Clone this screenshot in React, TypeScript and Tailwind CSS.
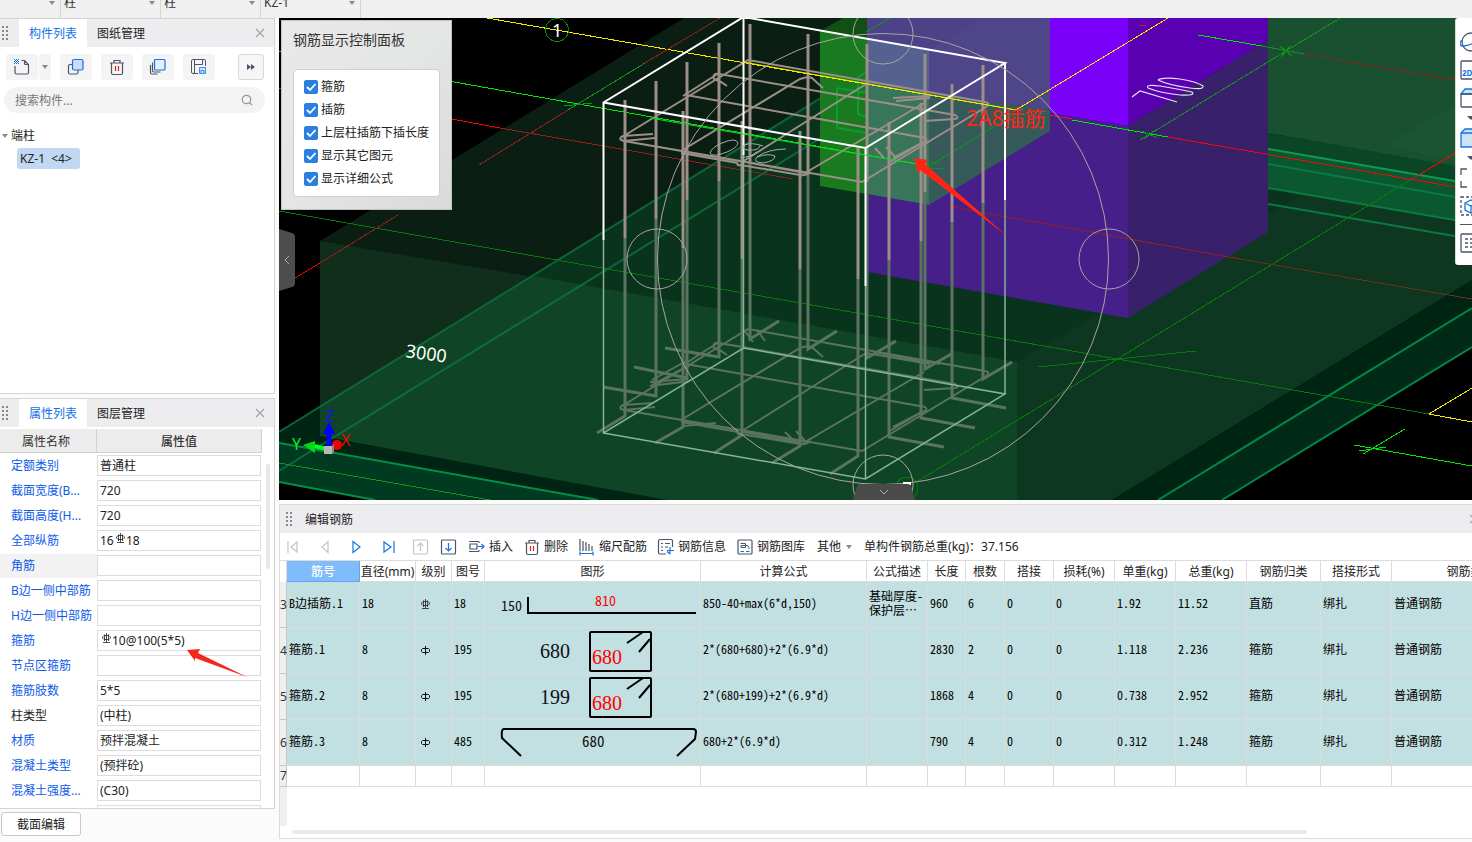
import React from "react";

const UI = "font-['Noto_Sans','Noto_Sans_CJK_SC',sans-serif]";
const CELL = "font-['Noto_Sans_CJK_SC',sans-serif] [font-feature-settings:'hwid']";

type IconProps = { children: React.ReactNode; label?: string; className?: string };

function Icon({ children, className = "h-[18px] w-[18px]" }: IconProps) {
  return (
    <svg viewBox="0 0 18 18" fill="none" stroke="#4b5568" strokeWidth="1.2" aria-hidden="true" className={className}>
      {children}
    </svg>
  );
}

function Caret() {
  return (
    <svg viewBox="0 0 6 4" aria-hidden="true" className="h-1 w-1.5 shrink-0">
      <path d="M0 0H6L3 4Z" fill="#8a8a8a" />
    </svg>
  );
}

function Grip() {
  return (
    <svg viewBox="0 0 8 16" aria-hidden="true" className="h-4 w-2 shrink-0">
      <g fill="#888">
        {[1, 5, 9, 13].map((y) => (
          <React.Fragment key={y}>
            <rect x="1" y={y} width="2" height="2" />
            <rect x="5" y={y} width="2" height="2" />
          </React.Fragment>
        ))}
      </g>
    </svg>
  );
}

function Close() {
  return (
    <svg viewBox="0 0 10 10" aria-hidden="true" className="h-2.5 w-2.5">
      <path d="M1 1L9 9M9 1L1 9" stroke="#a3a3a3" strokeWidth="1.2" />
    </svg>
  );
}

function Trash() {
  return (
    <Icon>
      <path d="M2 5H16M6 5V2.500H12V5M3.500 5V15Q3.500 16.500 5 16.500H13Q14.500 16.500 14.500 15V5" />
      <path d="M7.500 8V13M10.500 8V13" stroke="#e02020" />
    </Icon>
  );
}

function Rebar({ level }: { level: 1 | 3 }) {
  return (
    <svg viewBox="0 0 11 11" role="img" aria-label={level === 3 ? "HRB400" : "HPB300"} className="h-[11px] w-[11px] shrink-0">
      {level === 3 ? (
        <path d="M3 2.500H8L9.500 4V5L8 6.500H3L1.500 5V4ZM5.500 0V10M3.500 1.500V8M7.500 1.500V8M2 9.500H9" fill="none" stroke="#222" strokeWidth=".8" />
      ) : (
        <path d="M2.500 3.500H8.500L9.500 4.500V6.500L8.500 7.500H2.500L1.500 6.500V4.500ZM5.500 1V10" fill="none" stroke="#111" />
      )}
    </svg>
  );
}

function TopBar() {
  const items = ["", "柱", "柱", "KZ-1"];
  return (
    <div className="flex h-[18px] shrink-0 items-end overflow-hidden bg-[#f0f0f0]">
      {items.map((v, i) => (
        <div key={i} className="relative flex h-[30px] w-[100px] shrink-0 items-center border-r border-[#d6d6d6] first:w-[61px]">
          <select
            aria-label={`构件选择 ${i + 1}`}
            defaultValue={v}
            className="h-full w-full appearance-none bg-transparent pl-[3px] text-xs text-[#333] outline-none"
          >
            <option>{v}</option>
          </select>
          <span className="pointer-events-none absolute right-[5px] flex">
            <Caret />
          </span>
        </div>
      ))}
    </div>
  );
}

function PanelTabs({ active, other }: { active: string; other: string }) {
  return (
    <div className="flex h-7 shrink-0 items-stretch bg-[#ededf0]">
      <div className="flex w-[19px] items-center pl-px">
        <Grip />
      </div>
      <button className="bg-white px-2.5 pt-0.5 text-xs text-[#1272e6]">{active}</button>
      <button className="px-2.5 pt-0.5 text-xs text-[#222]">{other}</button>
      <button aria-label="关闭" className="ml-auto flex items-center px-[9px]">
        <Close />
      </button>
    </div>
  );
}

const toolBtn = "flex h-[26px] w-8 items-center justify-center rounded-[3px] bg-[#f4f4f5]";

function ComponentPanel() {
  return (
    <section className="flex h-[376px] shrink-0 flex-col border-y border-r border-[#d4d4d4] bg-white">
      <PanelTabs active="构件列表" other="图纸管理" />
      <div className="flex items-center gap-[9px] pl-1.5 pr-2.5 pt-[7px]">
        <div className="flex gap-px">
          <button aria-label="新建" className={toolBtn}>
            <Icon>
              <path d="M8.500 2.500H11.500L15.500 6.500V14.500Q15.500 16 14 16H3.500Q2 16 2 14.500V8M11.500 2.500V5.500Q11.500 6.500 12.500 6.500H15.500" />
              <path d="M1 1.500H6M2 2.500H6M1 3.500H6M2 4.500H6M1 5.500H6" stroke="#1677e8" strokeDasharray="1 1" strokeWidth="1" />
            </Icon>
          </button>
          <button aria-label="新建选项" className="flex h-[26px] w-3 items-center justify-center rounded-[3px] bg-[#f4f4f5]">
            <Caret />
          </button>
        </div>
        <button aria-label="复制" className={toolBtn}>
          <Icon>
            <rect x="1.500" y="6.500" width="9.500" height="9.500" rx="1.500" />
            <rect x="5.500" y="1.500" width="10.500" height="10.500" rx="1.500" stroke="#1272e6" fill="#cbdcf5" />
          </Icon>
        </button>
        <button aria-label="删除" className={toolBtn}>
          <Trash />
        </button>
        <button aria-label="层间复制" className={toolBtn}>
          <Icon>
            <path d="M1.500 7V14.500Q1.500 16 3 16H8.500M3.500 4.500V12.500Q3.500 14 5 14H11.500" />
            <rect x="5.500" y="1.500" width="10.500" height="10.500" rx="1" stroke="#1272e6" fill="#e6f0fd" />
          </Icon>
        </button>
        <button aria-label="存档" className={toolBtn}>
          <Icon>
            <path d="M8 15.500H3Q1.500 15.500 1.500 14V3Q1.500 1.500 3 1.500H14Q15.500 1.500 15.500 3V8M4.500 1.500V15M4.500 6.500H12.500V1.500" strokeWidth="1" />
            <path d="M9.500 9.500H15.500V15.500H9.500ZM11 15V12.500H14V15" stroke="#3f8cea" strokeWidth="1" fill="#cfe2fb" />
          </Icon>
        </button>
        <button aria-label="更多" className="ml-auto flex h-[26px] w-[26px] items-center justify-center rounded-[3px] border border-[#d9d9d9] bg-[#f6f6f6]">
          <svg viewBox="0 0 8 6" aria-hidden="true" className="h-1.5 w-2">
            <path d="M0 0L4 3L0 6ZM4 0L8 3L4 6Z" fill="#4b5568" />
          </svg>
        </button>
      </div>
      <div className="ml-1 mr-[9px] mt-[7px] flex h-[26px] items-center rounded-full bg-[#f3f3f4] pl-[11px] pr-3">
        <input aria-label="搜索构件" placeholder="搜索构件..." className="min-w-0 flex-1 bg-transparent pt-px text-xs outline-none placeholder:text-[#777]" />
        <svg viewBox="0 0 12 12" fill="none" stroke="#999" strokeWidth="1.300" aria-hidden="true" className="h-3 w-3">
          <circle cx="5.500" cy="5.500" r="4.200" />
          <path d="M8.500 8.500L11 11" />
        </svg>
      </div>
      <ul className="mt-2.5 text-xs text-[#222]">
        <li>
          <div className="flex h-6 items-center gap-[3px] pl-0.5 pt-0.5">
            <Caret />
            端柱
          </div>
          <ul className="pl-[17px]">
            <li className="mt-px flex h-[21px] w-[63px] items-center whitespace-pre rounded-[3px] bg-[#c0d8f2] pl-[3px]">{"KZ-1  <4>"}</li>
          </ul>
        </li>
      </ul>
    </section>
  );
}

type Prop = { name: string; value?: string; plain?: boolean; marked?: boolean; parts?: [string, string] };

const props: Prop[] = [
  { name: "定额类别", value: "普通柱" },
  { name: "截面宽度(B...", value: "720" },
  { name: "截面高度(H...", value: "720" },
  { name: "全部纵筋", parts: ["16", "18"] },
  { name: "角筋", marked: true },
  { name: "B边一侧中部筋" },
  { name: "H边一侧中部筋" },
  { name: "箍筋", parts: ["", "10@100(5*5)"] },
  { name: "节点区箍筋" },
  { name: "箍筋肢数", value: "5*5" },
  { name: "柱类型", value: "(中柱)", plain: true },
  { name: "材质", value: "预拌混凝土" },
  { name: "混凝土类型", value: "(预拌砼)" },
  { name: "混凝土强度...", value: "(C30)" },
  { name: "" },
];

function PropertyPanel() {
  return (
    <section className="relative mt-1 flex min-h-0 flex-1 flex-col border-y border-r border-[#d4d4d4] bg-white">
      <PanelTabs active="属性列表" other="图层管理" />
      <div className="mr-3 mt-0.5 flex h-6 shrink-0 border-b border-[#d0d0d0] bg-[#ececed] text-xs text-[#333]">
        <div className="flex w-[97px] items-center justify-center border-r border-[#d0d0d0] pr-1 pt-0.5">属性名称</div>
        <div className="flex flex-1 items-center justify-center border-r border-[#d0d0d0] pt-0.5 font-medium">属性值</div>
      </div>
      <div className="min-h-0 flex-1 overflow-hidden">
        {props.map((p, i) => (
          <div key={i} className="flex h-[25px] items-center">
            <label
              htmlFor={`prop-${i}`}
              className={`flex h-6 w-[97px] shrink-0 items-center overflow-hidden whitespace-nowrap pl-[11px] text-xs ${p.plain ? "text-[#222]" : "text-[#0d5be8]"} ${p.marked ? "bg-[#f2f2f2]" : ""}`}
            >
              {p.name}
            </label>
            <div className="mr-[13px] flex h-[21px] min-w-0 flex-1 items-center border border-[#dcdcdc] bg-white px-0.5 text-xs text-[#222]">
              {p.parts ? (
                <>
                  {p.parts[0] ? <input aria-label={`${p.name}根数`} defaultValue={p.parts[0]} className="w-[15px] bg-transparent outline-none" /> : <span className="w-px" />}
                  <span className="pb-1">
                    <Rebar level={3} />
                  </span>
                  <input id={`prop-${i}`} defaultValue={p.parts[1]} className="min-w-0 flex-1 bg-transparent outline-none" />
                </>
              ) : (
                <input id={`prop-${i}`} aria-label={p.name || "其它属性"} defaultValue={p.value ?? ""} className="min-w-0 flex-1 bg-transparent outline-none" />
              )}
            </div>
          </div>
        ))}
      </div>
      <div className="absolute right-1 top-[65px] h-[105px] w-1 rounded-full bg-[#e8e8e8]" />
      <svg viewBox="0 0 60 30" aria-hidden="true" className="pointer-events-none absolute left-[187px] top-[250px] h-[30px] w-[60px]">
        <path d="M0 1L13 0L11 4L60 28L8 9L8 12Z" fill="#f5261a" />
      </svg>
    </section>
  );
}

const bars: number[][] = [
  [625, 100, 238, 416, 597, 433],
  [656, 81, 219, 396, 603, 387],
  [687, 62, 200, 378, 634, 367],
  [719, 43, 181, 357, 665, 348],
  [683, 111, 248, 427, 655, 443],
  [742, 121, 259, 435, 714, 453],
  [750, 24, 162, 339, 779, 321],
  [800, 131, 269, 446, 772, 463],
  [808, 34, 172, 349, 837, 331],
  [858, 148, 279, 456, 830, 474],
  [867, 44, 182, 358, 896, 341],
  [925, 54, 192, 369, 953, 353],
  [921, 103, 241, 418, 975, 428],
  [889, 122, 260, 437, 944, 447],
  [952, 84, 222, 398, 1006, 408],
  [983, 65, 203, 379, 1012, 362],
];

const stirrups =
  "M653 134L623 136Q617 139 624 141L862 182L986 107Q991 103 985 102L748 60L622 137M655 138L624 141" +
  "M727 86L721 82L714 79Q712 73 719 74L955 115Q960 118 955 119L924 121" +
  "M686 95L925 138Q929 141 922 143L888 163M924 142L893 158" +
  "M681 151L800 79Q808 76 812 78L823 88M681 153L738 163" +
  "M742 162L866 84M740 161L805 173L924 103M738 163Q736 166 741 165L800 175Q806 176 811 172" +
  "M719 73L683 96";

const topHooks = "M893 98L930 96M896 101L930 98M875 148L884 158M886 147L896 158";

const bottomHooks =
  "M785 432L796 443M796 431L806 442M757 330L765 341M745 331L753 342M650 386L690 381M650 382L688 379M652 385L690 365M652 380L688 360M683 426L716 423M743 432L800 443M866 353L930 364M874 352L940 364";

function Scene() {
  return (
    <svg viewBox="279 18 1193 482" preserveAspectRatio="xMinYMin slice" role="img" aria-label="三维视图" className="block h-full w-full">
      <rect x="279" y="18" width="1400" height="700" fill="#000" />
      <path d="M320 241L684 18H1472V280L1112 500H656L320 436Z" fill="#0b1e13" />
      <path d="M279 432L320 407V436L656 500H598L279 443Z" fill="#002414" />
      <path d="M279 443L598 500H375L279 482Z" fill="#003a20" />
      <path d="M320 407L838 88L1268 150L1472 184V280L1112 500H656L320 436Z" fill="#0a331d" />
      <path d="M320 407L533 276L1017 362V500H656L320 436Z" fill="#0f4526" />
      <path d="M320 241L533 277L511 290L320 407Z" fill="#112e1c" />
      <path d="M1017 362L1472 95V280L1112 500H1017Z" fill="#0d3720" />
      <path d="M1112 500L1472 280V308L1158 500Z" fill="#002414" />
      <path d="M1158 500L1472 308V347L1222 500Z" fill="#002a17" />
      <path d="M656 498L668 500H598L320 450V436Z" fill="#002414" />
      <path d="M1268 18H1472V170L1268 133Z" fill="#195030" />
      <path d="M1472 95L1385 145L1472 165Z" fill="#1b5431" />
      <path d="M1268 133L1472 169V185L1268 149Z" fill="#0a4526" />
      <path d="M1268 149L1472 184V223L1268 188Z" fill="#0b5830" />
      <g strokeWidth="2" fill="none">
        <path d="M279 432L837 88M279 471L837 128M837 88V128M837 88L866 93M837 128L866 133" stroke="#0c7540" strokeOpacity=".8" />
        <path d="M279 443L598 500M279 482L375 500" stroke="#009048" />
        <path d="M1158 500L1472 308M1222 500L1472 347" stroke="#008745" />
        <path d="M1268 149L1472 184" stroke="#0f9a54" />
        <path d="M1268 164L1472 200M1268 188L1472 223M1268 204L1472 239" stroke="#0a7a42" />
      </g>

      <path d="M820 31L843 18H867V38Z" fill="#115014" />
      <path d="M820 31L867 38V194L820 186Z" fill="#1a7a1f" />
      <path d="M867 18H1050V113L929 93L867 83Z" fill="#4c4288" />
      <path d="M929 50L982 18H1050V113L929 93Z" fill="#4f4589" />
      <path d="M867 38L929 50V93L867 83Z" fill="#55628f" />
      <path d="M867 194L929 205L1050 113L1128 126V318L867 272Z" fill="#461f8b" />
      <path d="M867 83L929 93V205L867 194Z" fill="#38755b" />
      <path d="M929 93L1050 110V131L929 205Z" fill="#355a59" />
      <path d="M1050 18H1128V126L1050 113Z" fill="#7a00fa" />
      <path d="M1128 18H1268V40L1128 126Z" fill="#5900b2" />
      <path d="M1128 126L1268 40V232L1128 318Z" fill="#38206b" />
      <path d="M867 72L858 77V114L867 117M837 88L867 93M837 88V128L867 133" stroke="#0f9a34" strokeWidth="2" fill="none" />

      <g fill="none" strokeWidth="1" shapeRendering="crispEdges">
        <path d="M487 18L1016 110L1168 18M1472 388L1429 414L1472 422" stroke="#f2e800" />
        <path d="M279 51L923 165M1354 445L1472 466M1363 454L1405 429M1359 451L1386 447M1072 120L1168 137M1198 35L1262 46" stroke="#00e800" />
        <path d="M279 211L1429 414M918 481L1410 180M1038 367L1196 351" stroke="#087808" />
        <path d="M568 110L645 63M564 106L592 103M923 170L1016 113M914 167L945 169M918 161L940 164M1140 140L1340 18M1142 131L1157 138M1144 139L1155 130M1262 46L1304 54M1280 46L1292 56M1291 45L1281 57M279 463L490 500M866 32L890 18" stroke="#12921c" />
        <path d="M279 88L452 119L500 128M1168 137L1472 190M1410 180L1472 143M295 278L320 263" stroke="#f00808" />
        <path d="M500 128L793 179M479 165L568 110M645 63L720 18M320 263L398 215M947 206L1240 259M1304 54L1472 83" stroke="#92201a" />
        <path d="M1240 259L1472 299" stroke="#6b301c" />
        <path d="M1139 25L1146 26M1050 115L1072 119" stroke="#e01040" />
        <circle cx="557" cy="30" r="11.500" stroke="#08850c" />
        <circle cx="907" cy="488" r="11" stroke="#08750c" />
      </g>
      <text x="552" y="37" fontSize="18" fill="#fff" fontFamily="Noto Sans">1</text>

      <g fill="none" stroke="#5b745f">
        <path d={stirrups} transform="translate(0 269)" strokeWidth="2" />
        <path d={bottomHooks} strokeWidth="2" />
        {bars.map(([x, , m, b, fx, fy], i) => (
          <path key={i} d={`M${x} ${m}V${b}L${fx} ${fy}`} strokeWidth="3" />
        ))}
      </g>
      <g fill="none" stroke="#9b8f88">
        <path d={stirrups + topHooks} strokeWidth="2" />
        {bars.map(([x, t, m], i) => (
          <path key={i} d={`M${x} ${t}V${m}`} strokeWidth="3" />
        ))}
      </g>
      <path d="M603.500 240V433L743.500 348L1005 394L865.500 479L603.500 433M743.500 155V348M865.500 286V479M1005 200V394" fill="none" stroke="#86b497" strokeWidth="1.500" />
      <path d="M603.500 240V102.500L743.500 17L1005 63L865.500 148L603.500 102.500M743.500 17V155M865.500 148V286M1005 63V200" fill="none" stroke="#fff" strokeWidth="2" />
      <path d="M650 118L923 165" stroke="#10d820" />
      <path d="M743 62L1016 110" stroke="#f2e800" />
      <g fill="none" stroke="#a8a3a3">
        <circle cx="883" cy="259" r="225.500" />
        <circle cx="657" cy="259" r="30" />
        <circle cx="1109" cy="259" r="30" />
        <circle cx="883" cy="34" r="30" />
        <circle cx="883" cy="485" r="30" />
      </g>
      <path d="M710 153Q712 147 722 143Q736 137 738 143Q737 148 727 152Q712 158 710 153M763 146Q752 142 744 145Q740 149 748 150Q758 151 760 146M741 157Q750 158 757 152M786 149Q768 149 757 157Q752 162 763 163Q775 161 775 156Q768 153 757 157" fill="none" stroke="#9fb0a5" />
      <path d="M1132 97L1140 91L1177 102M1148 88Q1145 84 1160 86Q1178 89 1192 92Q1196 96 1180 95Q1160 93 1148 88M1158 80Q1162 77 1180 79Q1198 82 1203 86Q1204 90 1190 88Q1168 85 1158 80" fill="none" stroke="#e8def5" strokeWidth="1.200" />

      <text x="405" y="357" fontSize="18" fill="#fff" fontFamily="Noto Sans" transform="rotate(8 405 357)">3000</text>
      <text x="966" y="126" fontSize="21" fill="#ff2616" fontFamily="Noto Sans, Noto Sans CJK SC">2A8插筋</text>
      <path d="M914 158L928 160L925 164L1007 236L920 170L918 174Z" fill="#ff2416" />

      <path d="M329 448V434" stroke="#0000ff" strokeWidth="5" />
      <path d="M329 422L335 434H323Z" fill="#0000ff" />
      <path d="M327 449L314 446" stroke="#00ff20" strokeWidth="4" />
      <path d="M303 445L315 441V453Z" fill="#00d818" />
      <circle cx="337" cy="445" r="5" fill="#f00000" />
      <path d="M331 449L341 443" stroke="#f00000" strokeWidth="4" />
      <rect x="324" y="446" width="8" height="8" fill="#b8b8b8" />
      <path d="M332 446L334 444V452L332 454Z" fill="#888" />
      <g fontSize="16" fontFamily="Noto Sans">
        <text x="325" y="422" fill="#1010ff">Z</text>
        <text x="292" y="450" fill="#00f020">Y</text>
        <text x="341" y="446" fill="#f00000">X</text>
      </g>
      <path d="M903 482H911V485H903Z" fill="#fff" />
    </svg>
  );
}

function DisplayPanel() {
  const options = ["箍筋", "插筋", "上层柱插筋下插长度", "显示其它图元", "显示详细公式"];
  return (
    <div className="absolute left-0.5 top-0.5 border border-[#c2c4c3] bg-gradient-to-br from-[#e9e9e9] via-[#e4e5e5] to-[#d8dbda] px-[11px] pb-3 pt-[9px]">
      <h2 className="text-sm leading-5 text-[#333]">钢筋显示控制面板</h2>
      <div className="mt-[19px] flex w-[147px] flex-col rounded border border-[#cfcfcf] bg-white pb-1.5 pl-2.5 pt-[5px]">
        {options.map((o) => (
          <label key={o} className="flex h-[23px] items-center gap-[3px] whitespace-nowrap text-xs text-[#222]">
            <span className="relative flex">
              <input type="checkbox" defaultChecked className="peer h-3.5 w-3.5 appearance-none rounded-[2px] border border-[#2a7fe0] checked:bg-[#2a7fe0]" />
              <svg viewBox="0 0 14 14" fill="none" stroke="#fff" strokeWidth="1.800" aria-hidden="true" className="pointer-events-none absolute left-0 top-0 h-3.5 w-3.5">
                <path d="M3 7L6 10L11.500 4" />
              </svg>
            </span>
            {o}
          </label>
        ))}
      </div>
    </div>
  );
}

const viewBtn = "flex h-5 w-[22px] shrink-0";

function ViewIcon({ children }: { children: React.ReactNode }) {
  return (
    <svg viewBox="0 0 22 20" fill="none" stroke="#4b5568" strokeWidth="1.300" aria-hidden="true" className="h-5 w-[22px]">
      {children}
    </svg>
  );
}

function DownMark() {
  return (
    <svg viewBox="0 0 22 4" aria-hidden="true" className="h-1 w-[22px] shrink-0">
      <path d="M7 0H15L11 4Z" fill="#4b5568" />
    </svg>
  );
}

function ViewBar() {
  return (
    <div className="absolute right-0 top-0 flex w-[17px] flex-col gap-2 overflow-hidden rounded-l-[3px] border-l border-[#d8d8d8] bg-white pb-3 pl-1 pt-3.5">
      <button aria-label="动态观察" className={viewBtn}>
        <ViewIcon>
          <circle cx="11" cy="10" r="9" />
          <path d="M2 8Q-3 14 4 14Q12 13 19 8" stroke="#1272e6" />
        </ViewIcon>
      </button>
      <button aria-label="二维" className={viewBtn}>
        <ViewIcon>
          <rect x="1" y="1" width="19" height="18" rx="1" />
          <text x="2" y="16" fontSize="8" fontWeight="700" fill="#1272e6" stroke="none">2D</text>
        </ViewIcon>
      </button>
      <button aria-label="三维" className={viewBtn}>
        <ViewIcon>
          <path d="M1 6L5 1H21L17 6Z" stroke="#1272e6" fill="#cfe1f8" />
          <rect x="1" y="6" width="18" height="13" rx="1" />
        </ViewIcon>
      </button>
      <DownMark />
      <button aria-label="实体" className={viewBtn}>
        <ViewIcon>
          <path d="M1 5L5 1H21L17 5V19H1Z" stroke="#1272e6" fill="#cfe1f8" />
          <path d="M1 5H18" stroke="#1272e6" />
        </ViewIcon>
      </button>
      <DownMark />
      <button aria-label="全屏" className={viewBtn}>
        <ViewIcon>
          <path d="M1 7V1H7M1 13V19H7M15 1H21V7M15 19H21V13" />
        </ViewIcon>
      </button>
      <button aria-label="选择范围" className={viewBtn}>
        <ViewIcon>
          <rect x="1" y="1" width="20" height="18" strokeDasharray="3 2" />
          <path d="M5 7L11 4L17 7V14L11 17L5 14ZM5 7L11 10L17 7M11 10V17" stroke="#1272e6" />
        </ViewIcon>
      </button>
      <div className="h-px shrink-0 bg-[#555]" />
      <button aria-label="显示设置" className={viewBtn}>
        <ViewIcon>
          <rect x="1" y="1" width="20" height="18" rx="1" />
          <path d="M5 6H8M10 6H15M5 10H8M10 10H15M5 14H8M10 14H15" />
        </ViewIcon>
      </button>
    </div>
  );
}

function Viewport() {
  return (
    <main className="relative min-h-0 flex-1 overflow-hidden bg-black">
      <Scene />
      <DisplayPanel />
      <button aria-label="收起左侧" className="absolute left-0 top-[211px] h-[62px] w-4">
        <svg viewBox="0 0 16 62" aria-hidden="true" className="h-full w-full">
          <path d="M0 0L13 4Q16 5 16 8V54Q16 57 13 58L0 62Z" fill="#4d4d4d" />
          <path d="M10 27L6 31L10 35" fill="none" stroke="#a8a8a8" />
        </svg>
      </button>
      <button aria-label="收起底部" className="absolute bottom-0 left-[574px] h-4 w-[62px]">
        <svg viewBox="0 0 62 16" aria-hidden="true" className="h-full w-full">
          <path d="M0 16L4 2Q5 0 7 0H55Q57 0 58 2L62 16Z" fill="#4a4a4a" />
          <path d="M27 6L31 10L35 6" fill="none" stroke="#b0b0b0" />
        </svg>
      </button>
      <ViewBar />
    </main>
  );
}

function Nav({ d, stroke, label }: { d: string; stroke: string; label: string }) {
  return (
    <button aria-label={label} className="flex w-8 justify-center">
      <svg viewBox="0 0 14 14" fill="none" stroke={stroke} strokeWidth="1.200" aria-hidden="true" className="h-3.5 w-3.5">
        <path d={d} />
      </svg>
    </button>
  );
}

const labelled = "flex shrink-0 items-center gap-[3px] whitespace-nowrap";

function RebarToolbar() {
  return (
    <div className="flex h-[27px] shrink-0 items-center pt-px text-xs text-[#222]">
      <div className="-ml-[3px] flex w-32 items-center">
        <Nav label="首行" stroke="#c4c4c4" d="M2 1V13M11 2V12L5 7Z" />
        <Nav label="上一行" stroke="#c4c4c4" d="M10 1.500V12.500L4 7Z" />
        <Nav label="下一行" stroke="#1272e6" d="M3 1.500V12.500L10 7Z" />
        <Nav label="末行" stroke="#1272e6" d="M2 2V12L9 7ZM12 1V13" />
      </div>
      <div className="ml-[7px] flex gap-2.5">
        <button aria-label="上移">
          <Icon>
            <rect x="1.500" y="2" width="14" height="14" rx="1" stroke="#c4c4c4" />
            <path d="M8.500 13V5M5.500 8L8.500 5L11.500 8" stroke="#c4c4c4" />
          </Icon>
        </button>
        <button aria-label="下移">
          <Icon>
            <rect x="1.500" y="2" width="14" height="14" rx="1" />
            <path d="M8.500 5V13M5.500 10L8.500 13L11.500 10" stroke="#1272e6" />
          </Icon>
        </button>
      </div>
      <button className={`${labelled} ml-2.5`}>
        <Icon>
          <path d="M1 3.500H11M1 13.500H11M2 6H9V11H2ZM11 3.500V5M11 12V13.500" />
          <path d="M10 8.500H16M13.500 6L16 8.500L13.500 11" stroke="#1272e6" />
        </Icon>
        插入
      </button>
      <button className={`${labelled} ml-2.5`}>
        <Trash />
        删除
      </button>
      <button className={`${labelled} ml-2.5`}>
        <Icon>
          <path d="M2 1V13M5 3V13M8 4V13M11 6V13M14 8V13" />
          <path d="M2 15.500H15M2 13.500V17.500M15 13.500V17.500" stroke="#1272e6" />
        </Icon>
        缩尺配筋
      </button>
      <button className={`${labelled} ml-2.5`}>
        <Icon>
          <path d="M9 16H3Q1.500 16 1.500 14.500V3Q1.500 1.500 3 1.500H14Q15.500 1.500 15.500 3V9M4 5.500H6M8 5.500H13M4 9H6M8 9H11M4 12.500H6" />
          <path d="M13 9V16M10 12.500H17M13 16L10 13.500" stroke="#1272e6" />
        </Icon>
        钢筋信息
      </button>
      <button className={`${labelled} ml-2.5`}>
        <Icon>
          <rect x="2" y="2" width="14" height="14" rx="1" />
          <path d="M4.500 5.500H9.500V9.500H5V7.500H9M9.500 7.500Q13 7 13 11" strokeWidth="1" />
          <path d="M4.500 13.500H8M10 13.500H13.500" stroke="#1272e6" />
        </Icon>
        钢筋图库
      </button>
      <button className={`${labelled} ml-3`}>
        <span className="pr-0.5">其他</span>
        <Caret />
      </button>
      <span className="ml-3 whitespace-nowrap">单构件钢筋总重(kg)：37.156</span>
    </div>
  );
}

const shapeText = "font-['Noto_Sans_CJK_SC'] [font-feature-settings:'hwid']";

function Shape({ kind, left }: { kind: "L" | "box" | "hook"; left?: string }) {
  return (
    <svg viewBox="0 0 215 45" aria-hidden="true" className="block h-[45px] w-full" fill="none" stroke="#000" strokeWidth="2">
      {kind === "L" && (
        <>
          <path d="M43 15V31H211" />
          <g stroke="none" fontSize="14" className={shapeText}>
            <text x="16" y="29" fill="#111">150</text>
            <text x="110" y="24" fontSize="14" fill="#f00">810</text>
          </g>
        </>
      )}
      {kind === "box" && (
        <>
          <rect x="105" y="4" width="61" height="39" rx="1" />
          <path d="M142 15L158 4M154 24L165 11" />
          <g stroke="none" fontSize="20" fontFamily="Liberation Serif">
            <text x="55" y="30" fill="#111">{left}</text>
            <text x="107" y="36" fill="#f00">680</text>
          </g>
        </>
      )}
      {kind === "hook" && (
        <>
          <path d="M36 36L17 18Q16 9 19 9H208Q211 9 211 12L210 19L192 36" />
          <text x="97" y="27" stroke="none" fill="#111" fontSize="15" className={shapeText}>680</text>
        </>
      )}
    </svg>
  );
}

const columns: [string, string][] = [
  ["筋号", "w-[73px]"],
  ["直径(mm)", "w-[56px]"],
  ["级别", "w-[36px]"],
  ["图号", "w-[33px]"],
  ["图形", "w-[216px]"],
  ["计算公式", "w-[166px]"],
  ["公式描述", "w-[61px]"],
  ["长度", "w-[38px]"],
  ["根数", "w-[39px]"],
  ["搭接", "w-[49px]"],
  ["损耗(%)", "w-[61px]"],
  ["单重(kg)", "w-[61px]"],
  ["总重(kg)", "w-[71px]"],
  ["钢筋归类", "w-[74px]"],
  ["搭接形式", "w-[71px]"],
  ["钢筋类型", "w-[158px]"],
];

const rows: { no: number; cells: React.ReactNode[] }[] = [
  { no: 3, cells: ["B边插筋.1", "18", <Rebar level={3} />, "18", <Shape kind="L" />, "850-40+max(6*d,150)", <>基础厚度-<br />保护层…</>, "960", "6", "0", "0", "1.92", "11.52", "直筋", "绑扎", "普通钢筋"] },
  { no: 4, cells: ["箍筋.1", "8", <Rebar level={1} />, "195", <Shape kind="box" left="680" />, "2*(680+680)+2*(6.9*d)", "", "2830", "2", "0", "0", "1.118", "2.236", "箍筋", "绑扎", "普通钢筋"] },
  { no: 5, cells: ["箍筋.2", "8", <Rebar level={1} />, "195", <Shape kind="box" left="199" />, "2*(680+199)+2*(6.9*d)", "", "1868", "4", "0", "0", "0.738", "2.952", "箍筋", "绑扎", "普通钢筋"] },
  { no: 6, cells: ["箍筋.3", "8", <Rebar level={1} />, "485", <Shape kind="hook" />, "680+2*(6.9*d)", "", "790", "4", "0", "0", "0.312", "1.248", "箍筋", "绑扎", "普通钢筋"] },
];

function cellLayout(i: number) {
  if (i === 4) return "";
  if (i === 2) return "pl-1";
  return "overflow-hidden whitespace-nowrap pb-[3px] pl-0.5 leading-[14px]";
}

function RebarTable() {
  return (
    <div className="overflow-hidden border-t border-[#dcdcdc]">
      <table className="w-[1270px] table-fixed border-separate border-spacing-0 text-xs">
        <thead>
          <tr className="h-[21px]">
            <th className="w-[7px] border-r border-[#dcdcdc] bg-white p-0" aria-label="行号" />
            {columns.map(([name, w], i) => (
              <th
                key={name}
                className={`${w} whitespace-nowrap border-b border-r p-0 pt-0.5 leading-[18px] ${i === 0 ? "border-[#62a4ec] bg-[#80bbfc] font-medium text-white" : "border-[#dcdcdc] bg-white font-normal text-[#222]"}`}
              >
                {name}
              </th>
            ))}
          </tr>
        </thead>
        <tbody>
          {rows.map((r) => (
            <tr key={r.no} className="h-[46px]">
              <th className="border-b border-r border-[#c8c8c8] bg-[#efeff0] p-0 font-normal text-[#333]">{r.no}</th>
              {r.cells.map((c, i) => (
                <td key={i} className={`border-b border-r border-[#dcdcdc] bg-[#c2dfe1] p-0 text-black ${CELL} ${cellLayout(i)}`}>
                  {c}
                </td>
              ))}
            </tr>
          ))}
          <tr className="h-[21px]">
            <th className="border-b border-r border-[#c8c8c8] bg-[#efeff0] p-0 font-normal leading-5 text-[#333]">7</th>
            {columns.map(([name]) => (
              <td key={name} className="border-b border-r border-[#dcdcdc] bg-white p-0" />
            ))}
          </tr>
        </tbody>
      </table>
    </div>
  );
}

function RebarEditor() {
  return (
    <section className="mb-[3px] mt-1 shrink-0 overflow-hidden border-y border-l border-[#dcdcdc] bg-white">
      <div className="flex h-7 items-center bg-[#ededf0] text-xs text-[#222]">
        <div className="flex w-[25px] pl-[5px]">
          <Grip />
        </div>
        <h2 className="pt-0.5">编辑钢筋</h2>
        <button aria-label="关闭" className="-mr-[7px] ml-auto">
          <Close />
        </button>
      </div>
      <RebarToolbar />
      <RebarTable />
      <div className="h-[39px] w-[7px] bg-[#efeff0]" />
      <div className="flex h-3 items-center pl-3">
        <div className="h-1 w-[86%] rounded-full bg-[#e9e9e9]" />
      </div>
    </section>
  );
}

export default function App() {
  return (
    <div className={`flex h-screen min-h-[600px] flex-col overflow-hidden bg-[#fbfbfb] ${UI}`}>
      <TopBar />
      <div className="flex min-h-0 flex-1">
        <aside className="flex w-[275px] shrink-0 flex-col">
          <ComponentPanel />
          <PropertyPanel />
          <div className="flex h-[33px] shrink-0 items-start pl-px pt-[3px]">
            <button className="h-6 w-20 rounded-[3px] border border-[#c8c8c8] bg-white pt-px text-xs text-[#222]">截面编辑</button>
          </div>
        </aside>
        <div className="ml-1 flex min-w-0 flex-1 flex-col">
          <Viewport />
          <RebarEditor />
        </div>
      </div>
    </div>
  );
}
